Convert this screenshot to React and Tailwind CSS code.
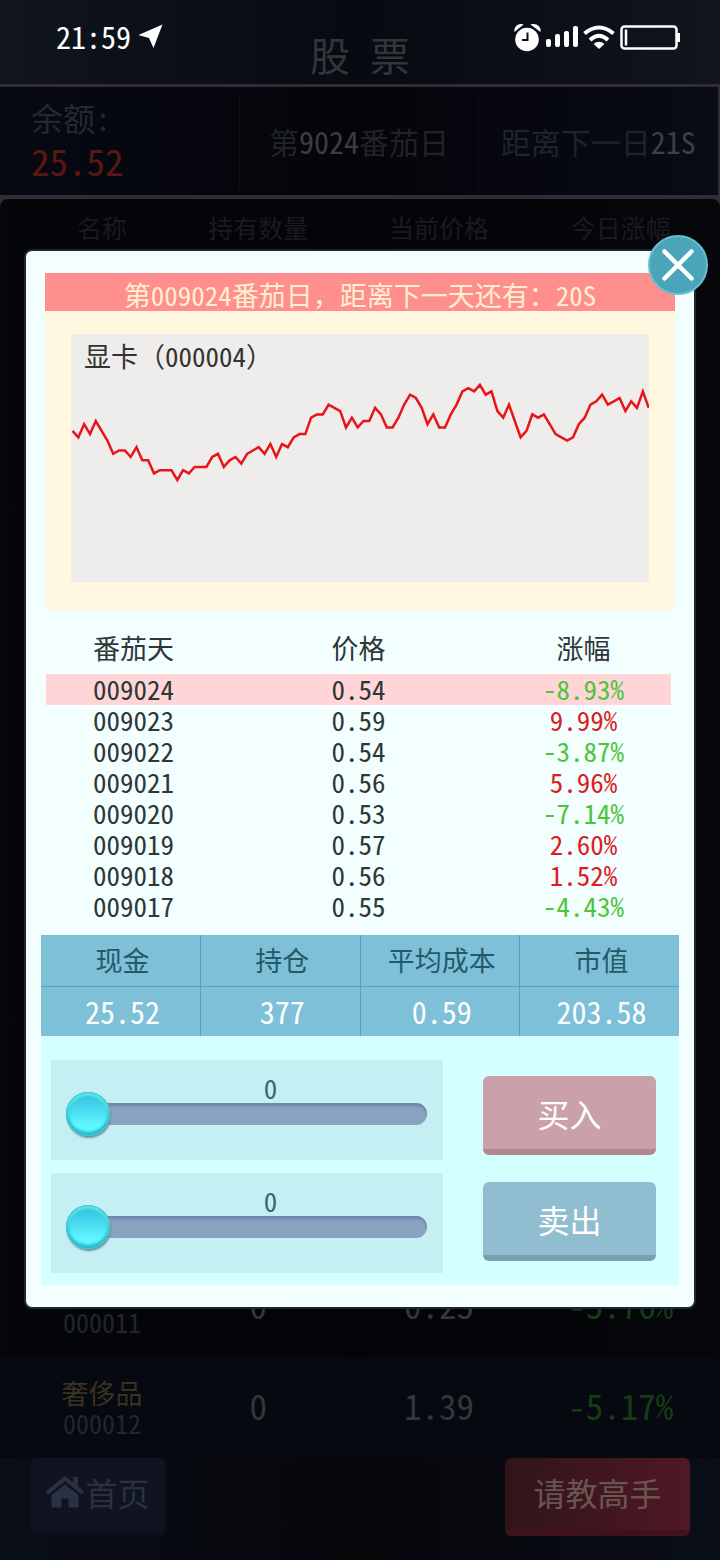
import { useState } from "react";

// closing levels for the last 100 days, in ticks above the period low
const levels = [
  15, 13, 17, 14, 18, 15, 12, 8, 9, 9, 7, 10, 6, 6, 2, 3, 3, 3, 0, 3,
  2, 4, 4, 4, 7, 8, 4, 6, 7, 5, 8, 9, 10, 8, 11, 7, 11, 10, 13, 14,
  14, 19, 20, 20, 23, 22, 21, 16, 19, 16, 18, 18, 22, 20, 16, 16, 19, 23, 26, 25,
  22, 17, 20, 16, 16, 20, 23, 27, 28, 27, 29, 26, 27, 21, 19, 23, 18, 13, 15, 20,
  19, 20, 17, 14, 13, 12, 13, 17, 19, 23, 24, 26, 23, 24, 25, 21, 24, 22, 27, 22,
];

const history = [
  { day: "009024", price: "0.54", change: "-8.93%" },
  { day: "009023", price: "0.59", change: "9.99%" },
  { day: "009022", price: "0.54", change: "-3.87%" },
  { day: "009021", price: "0.56", change: "5.96%" },
  { day: "009020", price: "0.53", change: "-7.14%" },
  { day: "009019", price: "0.57", change: "2.60%" },
  { day: "009018", price: "0.56", change: "1.52%" },
  { day: "009017", price: "0.55", change: "-4.43%" },
];

const holdings = [
  { label: "现金", value: "25.52" },
  { label: "持仓", value: "377" },
  { label: "平均成本", value: "0.59" },
  { label: "市值", value: "203.58" },
];

const stocks = [
  { code: "000011", held: "0", price: "0.25", change: "-5.76%" },
  { name: "奢侈品", code: "000012", held: "0", price: "1.39", change: "-5.17%" },
];

const listGrid = "grid grid-cols-[132fr_180fr_181fr_182fr] pl-9 pr-2 text-center";

function StatusIcons() {
  return (
    <div className="flex items-center gap-[5px] pt-[22px] pr-10 justify-self-end text-white">
      <svg className="h-8 w-[27px]" viewBox="0 0 27 32" fill="currentColor">
        <circle cx="13" cy="17.5" r="11.8" />
        <path d="M.5 10C-.5 5 4 .5 9.500 2.500zM26.500 10C27.500 5 23 .5 16.500 2.500z" />
        <path d="M13.5 10.5V18H8" fill="none" stroke="#0b0f18" strokeWidth="2" />
      </svg>
      <svg className="h-8 w-8" viewBox="0 0 32 32" fill="currentColor">
        <rect x="0" y="17" width="5" height="8" rx="2" />
        <rect x="9" y="12" width="5" height="13" rx="2" />
        <rect x="18" y="9" width="5" height="16" rx="2" />
        <rect x="27" y="4" width="5" height="21" rx="2" />
      </svg>
      <svg className="h-8 w-8" viewBox="0 0 32 32" fill="none" stroke="currentColor" strokeWidth="4">
        <path d="M1.500 11.500Q16 -.5 30.500 11.500" />
        <path d="M7 18Q16 9.500 25 18" />
        <path d="M16 27l-5.500-5Q16 17.500 21.500 22z" fill="currentColor" stroke="none" />
      </svg>
      <svg className="h-8 w-[60px]" viewBox="0 0 60 32" fill="none" stroke="currentColor">
        <rect x="1.500" y="4.500" width="55" height="22" rx="3" strokeWidth="2.500" />
        <path d="M6 7.500v16" strokeWidth="2.500" />
        <path d="M58.500 11v9" strokeWidth="3" />
      </svg>
    </div>
  );
}

function PriceChart() {
  const points = levels.map((l, i) => `${(1.5 + i * 5.82).toFixed(1)},${(146 - l * 3.28).toFixed(1)}`).join(" ");
  return (
    <svg className="absolute inset-0 h-full w-full" viewBox="0 0 578 248" preserveAspectRatio="none" aria-hidden="true">
      <polyline points={points} fill="none" stroke="#e8141a" strokeWidth="2.500" />
    </svg>
  );
}

function AmountSlider({ label, max }) {
  const [amount, setAmount] = useState(0);
  return (
    <label className="flex h-[100px] flex-col bg-[#c4f0f4] pt-3 pr-4 pl-[15px]">
      <span className="pl-12 text-center text-[27px] leading-8 text-[#3b6770]">
        <output>{amount}</output>
      </span>
      <input
        type="range"
        aria-label={label}
        min="0"
        max={max}
        value={amount}
        onChange={(e) => setAmount(Number(e.target.value))}
        className="-mt-3 block h-11 w-full appearance-none bg-transparent
          [&::-webkit-slider-runnable-track]:h-[22px] [&::-webkit-slider-runnable-track]:rounded-full
          [&::-webkit-slider-runnable-track]:bg-[#8ba1c0]
          [&::-webkit-slider-runnable-track]:shadow-[inset_0_3px_2px_#6d88ae]
          [&::-webkit-slider-thumb]:-mt-[11px] [&::-webkit-slider-thumb]:size-11
          [&::-webkit-slider-thumb]:appearance-none [&::-webkit-slider-thumb]:rounded-full
          [&::-webkit-slider-thumb]:bg-linear-to-b [&::-webkit-slider-thumb]:from-[#2fbcdc] [&::-webkit-slider-thumb]:to-[#5ff6ff] [&::-webkit-slider-thumb]:to-75%
          [&::-webkit-slider-thumb]:shadow-[inset_0_0_0_1px_#4cc4cc,inset_0_4px_2px_#58e6e8,inset_0_-4px_3px_#27b9cf,inset_3px_0_3px_#3ad0da,inset_-3px_0_3px_#3ad0da,1px_2px_2px_#6b8a9a]"
      />
    </label>
  );
}

function TradeDialog() {
  return (
    <div role="dialog" aria-label="显卡" className="relative rounded-lg border-2 border-[#1b2733] bg-[#f3ffff] pt-[22px] pb-[22px]">
      <button
        type="button"
        aria-label="关闭"
        className="absolute -top-4 -right-[14px] flex size-[60px] items-center justify-center rounded-full border-2 border-[#68bfcd] bg-[#4aa4ba]"
      >
        <svg className="size-9" viewBox="0 0 36 36" fill="none" stroke="#fff" strokeWidth="4.500" strokeLinecap="round">
          <path d="M4.500 4.500l27 27M31.500 4.500l-27 27" />
        </svg>
      </button>

      <section className="mx-[19px] bg-[#fff7e0]">
        <h2 className="bg-[#fe8f8d] pt-[6px] text-center text-[27px] leading-8 text-[#fff0d2]">
          第009024番茄日，距离下一天还有：20S
        </h2>
        <div className="px-[26px] pt-[23px] pb-7">
          <div className="relative h-[248px] bg-[#eeedeb]">
            <h3 className="pt-[6px] pl-[13px] text-[27px] leading-8 text-[#333]">显卡（000004）</h3>
            <PriceChart />
          </div>
        </div>
      </section>

      <table className="mt-4 mr-[23px] ml-5 w-[calc(100%-43px)] table-fixed text-center text-[27px] text-[#2f3638]">
        <thead>
          <tr className="h-12 align-top leading-[44px]">
            <th className="w-[28%] font-normal">番茄天</th>
            <th className="w-[44%] font-normal">价格</th>
            <th className="w-[28%] font-normal">涨幅</th>
          </tr>
        </thead>
        <tbody>
          {history.map((row, i) => (
            <tr key={row.day} className={`h-[31px] leading-[30px] align-top ${i === 0 ? "bg-[#ffd5d7]" : ""}`}>
              <td>{row.day}</td>
              <td>{row.price}</td>
              <td className={row.change.startsWith("-") ? "text-[#4cc53c]" : "text-[#dc1e24]"}>{row.change}</td>
            </tr>
          ))}
        </tbody>
      </table>

      <section className="mt-[13px] mr-[15px] ml-[15px] bg-[#d4ffff]">
        <table className="w-full table-fixed border-collapse bg-[#7dc0d8] text-center">
          <thead>
            <tr className="h-[51px] border-b border-[#58a1bb]">
              {holdings.map((h) => (
                <th key={h.label} className="border-l border-[#58a1bb] pl-1 text-[27px] leading-8 font-normal text-[#245a68] first:border-l-0">
                  {h.label}
                </th>
              ))}
            </tr>
          </thead>
          <tbody>
            <tr className="h-[50px]">
              {holdings.map((h) => (
                <td key={h.label} className="border-l border-[#58a1bb] pl-1 text-[30px] leading-8 text-white first:border-l-0">
                  {h.value}
                </td>
              ))}
            </tr>
          </tbody>
        </table>

        <div className="flex pt-6 pr-[23px] pb-3 pl-[10px]">
          <div className="flex flex-1 flex-col gap-[13px]">
            <AmountSlider label="买入数量" max={47} />
            <AmountSlider label="卖出数量" max={377} />
          </div>
          <div className="ml-10 flex w-[173px] flex-col gap-[27px] pt-4">
            <button type="button" className="h-[79px] rounded-md border-b-6 border-[#b3868f] bg-[#cba1a9] text-[32px] text-white">
              买入
            </button>
            <button type="button" className="h-[79px] rounded-md border-b-6 border-[#7a9fb2] bg-[#90bdd0] text-[32px] text-white">
              卖出
            </button>
          </div>
        </div>
      </section>
    </div>
  );
}

export default function App() {
  return (
    <div className="relative flex min-h-screen flex-col bg-linear-to-r from-[#10151e] via-[#070a11] to-[#10151e] font-['Noto_Sans_Mono_CJK_SC','Noto_Sans_CJK_SC',sans-serif]">
      <header className="grid h-[84px] grid-cols-[1fr_auto_1fr] items-start">
        <div className="flex items-center gap-2 pt-[18px] pl-14 text-[30px] leading-9 text-white">
          21:59
          <svg className="size-6" viewBox="0 0 24 24" fill="currentColor">
            <path d="M23.500 .5L-.5 11l10.500 3L14.500 24z" />
          </svg>
        </div>
        <h1 className="pt-[30px] text-[40px] leading-[48px] text-[#34353a]">股 票</h1>
        <StatusIcons />
      </header>

      <section className="grid h-[115px] grid-cols-3 border-y-3 border-r-2 border-b-4 border-[#352b38] bg-linear-to-r from-[#060a12] via-[#05040a] to-[#070c17] py-[6px] text-[30px] text-[#202329]">
        <div className="pl-[31px]">
          <div className="pt-[2px] text-[32px] leading-[44px] text-[#24282f]">余额:</div>
          <div className="text-[37px] leading-[42px] text-[#5c1614]">25.52</div>
        </div>
        <div className="flex items-center justify-center border-x border-[#10101c]">
          第<span className="text-[#3c3d44]">9024</span>番茄日
        </div>
        <div className="flex items-center justify-center">
          距离下一日<span className="text-[#3c3f47]">21S</span>
        </div>
      </section>

      <div className="flex flex-1 flex-col bg-[#352b38]">
        <main className="flex flex-1 flex-col rounded-t-lg bg-linear-to-r from-[#04060a] via-[#040408] to-[#05070b]">
          <div className={`${listGrid} pt-[10px] text-[25px] leading-9 text-[#191b20]`}>
            <span>名称</span>
            <span>持有数量</span>
            <span>当前价格</span>
            <span>今日涨幅</span>
          </div>
          <div className="mt-auto">
            {stocks.map((s) => (
              <div key={s.code} className={`${listGrid} h-[101px] items-center text-[35px] text-[#33363b] even:bg-[#060910]`}>
                <div className="flex flex-col">
                  <span className="h-[30px] text-[27px] leading-[30px] text-[#3a3220]">{s.name}</span>
                  <span className="text-[26px] leading-[30px] text-[#23262d]">{s.code}</span>
                </div>
                <span className="pb-1">{s.held}</span>
                <span className="pb-1">{s.price}</span>
                <span className="pb-1 text-[#153c14]">{s.change}</span>
              </div>
            ))}
          </div>
        </main>
      </div>

      <footer className="flex justify-between bg-linear-to-r from-[#0a0e17] via-[#06070b] to-[#0a0e17] px-[30px] pb-6 text-[32px]">
        <button type="button" className="flex h-[78px] w-[135px] items-center justify-center rounded-md border-b-6 border-[#0b111c] bg-[#0f1420] pb-1 text-[#2b3143]">
          <svg className="h-8 w-10" viewBox="0 0 40 32" fill="currentColor">
            <path d="M2 17L20 2.500 38 17" fill="none" stroke="currentColor" strokeWidth="4" strokeLinejoin="round" />
            <path d="M28 1h5v10l-5-4z" />
            <path d="M6 19L20 8l14 11V30.500q0 1.500-1.500 1.500H23v-9h-6v9H7.500Q6 32 6 30.500z" stroke="#0f1420" strokeWidth="1" />
          </svg>
          首页
        </button>
        <button type="button" className="h-[78px] w-[185px] rounded-md border-b-6 border-[#40131c] bg-linear-to-r from-[#31141a] to-[#4f1824] pb-1 text-[#6b5553]">
          请教高手
        </button>
      </footer>

      <div className="absolute inset-x-0 top-0 px-6 pt-[249px]">
        <TradeDialog />
      </div>
    </div>
  );
}
